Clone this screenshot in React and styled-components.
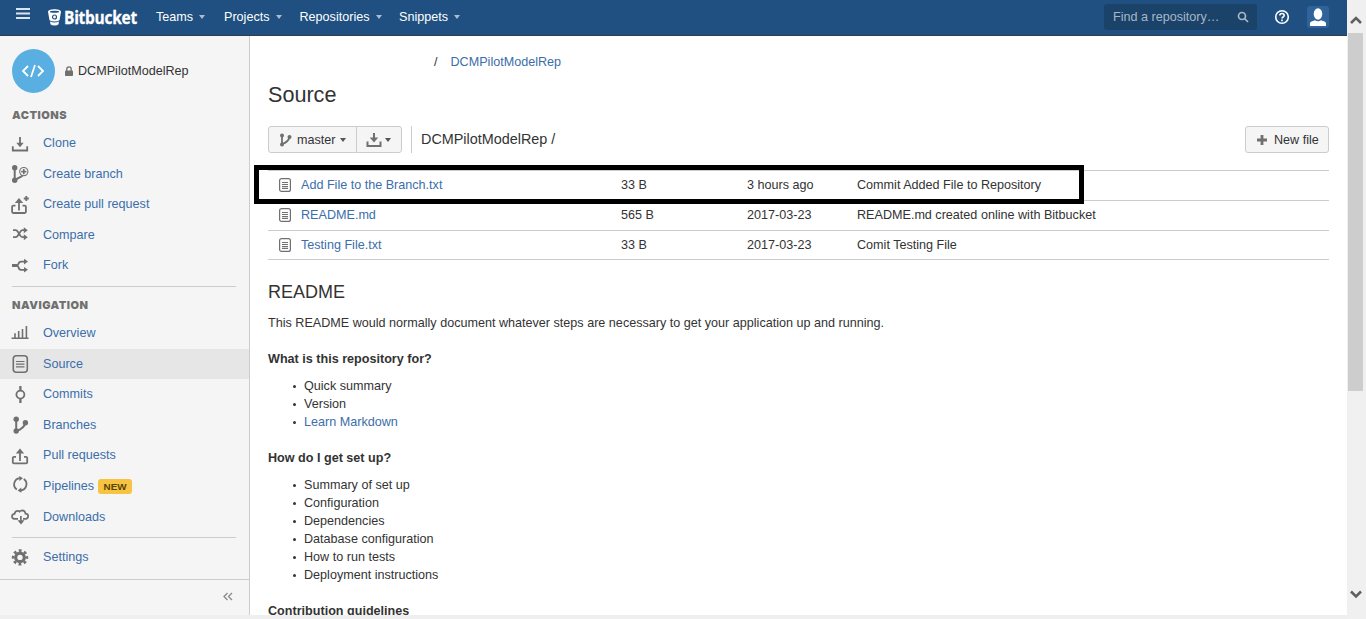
import React from "react";
import styled, { createGlobalStyle } from "styled-components";

const Global = createGlobalStyle`
  * { box-sizing: border-box; }
  body { margin: 0; overflow: hidden; background: #efefef; color: #333; font: 12.6px/18px "Liberation Sans", Arial, sans-serif; }
  ul, h1, h2, h3, p { margin: 0; padding: 0; }
  a { color: #3b6eaa; text-decoration: none; }
  svg { display: block; flex: none; }
`;

const Screen = styled.div`
  display: flex;
  height: 619px;
  width: 1366px;
`;
const Page = styled.div`
  width: 1347px;
  height: 615px;
  display: flex;
  flex-direction: column;
  overflow: hidden;
  background: #fff;
`;
const Header = styled.header`
  height: 36px;
  flex: none;
  display: flex;
  align-items: center;
  padding: 0 18px 1px 16px;
  background: #205081;
  border-bottom: 1px solid #2e3d54;
  color: #fff;
`;
const MenuToggle = styled.div`
  margin-bottom: 6px;
`;
const Brand = styled.div`
  display: flex;
  align-items: center;
  width: 108px;
  margin-left: 18px;
`;
const BrandName = styled.span`
  margin-left: 3px;
  font: 700 18px/20px "Open Sans", sans-serif;
  transform: scaleX(0.86);
  transform-origin: left;
  letter-spacing: -0.3px;
  -webkit-text-stroke: 0.3px #fff;
`;
const Menu = styled.div`
  display: flex;
  align-items: center;
  width: ${(p) => p.$w}px;
`;
const Caret = styled.i`
  border: 3.5px solid transparent;
  border-top: 4px solid ${(p) => p.$color || "#a9bdd3"};
  border-bottom: 0;
  margin-left: ${(p) => p.$gap ?? 6}px;
`;
const Search = styled.div`
  width: 153px;
  height: 26px;
  margin: 0 0 1px auto;
  padding: 0 8px 0 9px;
  display: flex;
  align-items: center;
  justify-content: space-between;
  border-radius: 3px;
  background: #1b4268;
  color: #a6b8ca;
`;
const UserBox = styled.div`
  width: 22px;
  height: 22px;
  margin-left: 17px;
  border-radius: 3px;
  background: #2f639a;
`;
const HelpBox = styled.div`
  margin-left: 17px;
`;
const Body = styled.div`
  flex: 1;
  min-height: 0;
  display: flex;
`;
const Sidebar = styled.aside`
  width: 250px;
  flex: none;
  display: flex;
  flex-direction: column;
  background: #f5f5f5;
  border-right: 1px solid #ccc;
`;
const Repo = styled.div`
  display: flex;
  align-items: center;
  height: 44px;
  margin: 13px 0 0 12px;
`;
const Avatar = styled.div`
  width: 43px;
  height: 44px;
  border-radius: 50%;
  background: #59afe1;
  display: flex;
  align-items: center;
  justify-content: center;
  margin-right: 10px;
  padding-right: 2px;
`;
const RepoName = styled.span`
  margin: -1px 0 0 5px;
`;
const SideTitle = styled.h2`
  font: 900 11px/18px Inter, "Liberation Sans", sans-serif;
  color: #707070;
  text-transform: uppercase;
  padding-left: 12px;
  margin-top: ${(p) => p.$top}px;
  letter-spacing: 0.5px;
`;
const Items = styled.nav`
  padding-top: ${(p) => p.$top}px;
`;
const Item = styled.a`
  display: flex;
  align-items: center;
  gap: 13px;
  height: 30.55px;
  padding-left: 10px;
  background: ${(p) => (p.$active ? "#e6e6e6" : "none")};
`;
const Badge = styled.span`
  margin: 1px 0 0 -9px;
  width: 34px;
  height: 15px;
  border-radius: 3px;
  background: #f6c342;
  color: #594300;
  font: 700 9.9px/15px "Liberation Sans", sans-serif;
  text-align: center;
`;
const Rule = styled.div`
  height: 1px;
  background: #ccc;
  margin: ${(p) => p.$top}px 13px 0 12px;
`;
const Collapse = styled.div`
  margin-top: auto;
  height: 36px;
  border-top: 1px solid #ccc;
  display: flex;
  align-items: center;
  justify-content: flex-end;
  padding: 0 16px 2px 0;
`;
const Main = styled.main`
  flex: 1;
  min-width: 0;
  padding: 17px 18px 0;
`;
const Crumbs = styled.div`
  display: flex;
  gap: 13px;
  padding-left: 166px;
`;
const Title = styled.h1`
  font-size: 21.6px;
  line-height: 26px;
  font-weight: 400;
  margin-top: 11px;
`;
const Toolbar = styled.div`
  display: flex;
  align-items: center;
  height: 27px;
  margin-top: 18px;
`;
const Button = styled.button`
  display: flex;
  align-items: center;
  height: 27px;
  width: ${(p) => p.$w}px;
  padding: 0 0 0 ${(p) => p.$pad}px;
  margin: 0 0 0 ${(p) => p.$ml ?? 0};
  border: 1px solid #ccc;
  border-radius: ${(p) => p.$radius || "3px"};
  background: #f5f5f5;
  color: #333;
  font: inherit;
`;
const ButtonText = styled.span`
  margin-left: ${(p) => p.$gap}px;
`;
const Path = styled.div`
  margin-left: 9px;
  height: 27px;
  padding-left: 9px;
  border-left: 1px solid #ccc;
  font-size: 14.4px;
  line-height: 27px;
`;
const Files = styled.div`
  position: relative;
  margin-top: 17px;
  border-top: 1px solid #ccc;
`;
const FileRow = styled.div`
  display: grid;
  grid-template-columns: 22px 320px 126px 110px 1fr;
  align-items: center;
  height: ${(p) => p.$h}px;
  padding: 0 0 1px 11px;
  border-bottom: 1px solid #ccc;
`;
const Highlight = styled.div`
  position: absolute;
  left: -14px;
  top: -6px;
  width: 830px;
  height: 39px;
  border: 5px solid #000;
`;
const ReadmeTitle = styled.h2`
  font-size: 18px;
  line-height: 22px;
  font-weight: 400;
  margin-top: 21px;
`;
const Para = styled.p`
  margin-top: 11px;
`;
const Sub = styled.h3`
  font-size: 12.6px;
  font-weight: 700;
  margin-top: 18px;
`;
const Bullets = styled.ul`
  list-style: none;
  margin-top: 9px;
`;
const Bullet = styled.li`
  display: flex;
  align-items: center;
  padding-left: 25px;
  &::before {
    content: "";
    width: 3px;
    height: 3px;
    border-radius: 50%;
    background: #333;
    margin: 1px 8px 0 0;
  }
`;
const Scrollbar = styled.div`
  width: 19px;
  padding: 13px 3px 17px 1px;
  display: flex;
  flex-direction: column;
  align-items: center;
  background: #f0f0f0;
`;
const Thumb = styled.div`
  width: 15px;
  height: 358px;
  margin: 8px 0 auto;
  background: #cdcdcd;
`;

const G = "#707070";
const Icon = ({ children, size = 20, w, h, vb, sw = 1.8, color = G }) => (
  <svg width={w || size} height={h || size} viewBox={vb || "0 0 20 20"} fill="none" stroke={color} strokeWidth={sw}>
    {children}
  </svg>
);
const F = { fill: G, stroke: "none" };

const icons = {
  clone: (
    <>
      <path d="M2.800 13.200v4.300h14.400v-4.300M10 4v7" />
      <path {...F} d="M6.300 9.700h7.400L10 14.300z" />
    </>
  ),
  createBranch: (
    <>
      <circle {...F} cx="4.700" cy="3.800" r="2.700" />
      <circle {...F} cx="4.700" cy="16.200" r="2.700" />
      <path d="M4.700 4v12l5-2.600q2-1 2.600-1.800" strokeWidth="2" />
      <circle cx="13.800" cy="7.600" r="4.100" strokeWidth="1.100" />
      <path d="M13.800 5v5.200M11.200 7.600h5.200" strokeWidth="1.600" />
    </>
  ),
  createPull: (
    <>
      <path d="M5.500 11.600H3.300q-1.200 0-1.200 1.200v5q0 1.200 1.200 1.200h11.400q1.200 0 1.200-1.200v-5q0-1.200-1.200-1.200H12.500M9 8v8.500" />
      <path {...F} d="M4.800 9h8.400L9 4z" />
      <path d="M16.300 2v5M13.800 4.500h5" />
    </>
  ),
  compare: (
    <>
      <path d="M3 5.200h2.500q1.500 0 2.700 2l1.800 3q1 2 2.500 2H15M3 12.200h2.500q1.500 0 2.600-2l1.900-3q1-2 2.500-2H15" />
      <path {...F} d="M13.800 2.200l4 3-4 3zM13.800 9.200l4 3-4 3z" />
    </>
  ),
  fork: (
    <>
      <path d="M2 10.500h5" strokeWidth="3" />
      <path d="M6.500 10.500q1.500 0 2-1.700.6-2.200 2.500-2.200h4M6.500 10.500q1.500 0 2 1.700.6 2.600 2.500 2.600h4" />
      <path {...F} d="M14 3.800l4 2.800-4 2.800zM14 12l4 2.800-4 2.800z" />
    </>
  ),
  overview: <path d="M1.500 15.300h17M5 15v-4.700M8.700 15V8M12.500 15V6M16.400 15V3" strokeWidth="1.600" />,
  source: (
    <>
      <rect x="3.300" y="1.800" width="14" height="16.500" rx="3" strokeWidth="1.600" />
      <path d="M6 7.500h8.500M6 10.200h8.500M6 12.900h8.500" strokeWidth="1.200" />
    </>
  ),
  commits: (
    <>
      <circle cx="10.400" cy="10.600" r="4" />
      <path d="M10.400 2v4.500M10.400 14.700V19" strokeWidth="2.300" />
    </>
  ),
  branches: (
    <>
      <circle {...F} cx="6.200" cy="4.200" r="2.700" />
      <circle {...F} cx="6.200" cy="16" r="2.700" />
      <circle {...F} cx="15.400" cy="7.800" r="2.700" />
      <path d="M6.200 4v12q8-2.500 9-8" strokeWidth="2" />
    </>
  ),
  pull: (
    <>
      <path d="M6 11.800H4q-1.200 0-1.200 1.200v4.200q0 1.200 1.200 1.200h12q1.200 0 1.200-1.200V13q0-1.200-1.200-1.200H14M10 7.500V16" />
      <path {...F} d="M5.800 8.600h8.400L10 3.600z" />
    </>
  ),
  pipelines: (
    <>
      <path d="M9.800 2.100A6.300 6.300 0 0 0 6.800 13.500M10.800 14.500A6.300 6.300 0 0 0 13.800 3.100" />
      <path {...F} d="M9.300 0l3.700 2.200-3.700 2.800zM11.300 11.600v5.200l-3.700-2.400z" />
    </>
  ),
  downloads: (
    <>
      <path d="M8 11.800H4.500q-2.500-.2-2.500-2.400 0-2.400 2.600-2.600.4-3 3.200-3 1.200 0 1.900.8 1-1.300 2.700-1.300 2.800.2 3.100 3.400 2.700.2 2.700 2.700-.2 2.300-2.600 2.400H13M10.900 9v5" strokeWidth="1.700" />
      <path {...F} d="M7.500 13.200h7l-3.500 4.300z" />
    </>
  ),
  settings: (
    <>
      <circle cx="10" cy="10.400" r="4.300" strokeWidth="3.200" />
      <circle cx="10" cy="10.400" r="6.900" strokeWidth="2.600" strokeDasharray="2.800 2.619" strokeDashoffset="1.400" />
    </>
  ),
};

const NavItem = ({ icon, label, active, badge }) => (
  <Item href="#" $active={active}>
    <Icon>{icons[icon]}</Icon>
    <span>{label}</span>
    {badge && <Badge>{badge}</Badge>}
  </Item>
);

const actions = [
  ["clone", "Clone"],
  ["createBranch", "Create branch"],
  ["createPull", "Create pull request"],
  ["compare", "Compare"],
  ["fork", "Fork"],
];
const navigation = [
  ["overview", "Overview"],
  ["source", "Source"],
  ["commits", "Commits"],
  ["branches", "Branches"],
  ["pull", "Pull requests"],
  ["pipelines", "Pipelines"],
  ["downloads", "Downloads"],
];
const menus = [
  ["Teams", 68],
  ["Projects", 75.5],
  ["Repositories", 99.5],
  ["Snippets", 70],
];
const files = [
  ["Add File to the Branch.txt", "33 B", "3 hours ago", "Commit Added File to Repository", 30],
  ["README.md", "565 B", "2017-03-23", "README.md created online with Bitbucket", 30],
  ["Testing File.txt", "33 B", "2017-03-23", "Comit Testing File", 29],
];
const setup = ["Summary of set up", "Configuration", "Dependencies", "Database configuration", "How to run tests", "Deployment instructions"];

export default function App() {
  return (
    <>
      <Global />
      <Screen>
        <Page>
          <Header>
            <MenuToggle>
              <Icon w={14} h={12} vb="0 0 14 12" color="#dbe4ee" sw={2}>
                <path d="M0 1h14M0 5.500h14M0 10h14" />
              </Icon>
            </MenuToggle>
            <Brand>
              <svg width="13" height="17" viewBox="0 0 13 17">
                <path fill="#fff" d="M0 2.800C0 1.200 3 .3 6.500.3S13 1.200 13 2.800l-1.500 8.500q-2 1.300-5 1.300t-5-1.300zM2 12.600q2 1 4.500 1t4.500-1l-.5 2.600q-1 1.300-4 1.300t-4-1.300z" />
                <ellipse cx="6.500" cy="2.700" rx="4.600" ry="1" fill="#205081" />
                <circle cx="6.500" cy="8" r="2" fill="none" stroke="#205081" strokeWidth="1.200" />
              </svg>
              <BrandName>Bitbucket</BrandName>
            </Brand>
            {menus.map(([m, w]) => (
              <Menu key={m} $w={w}>
                {m}
                <Caret />
              </Menu>
            ))}
            <Search>
              Find a repository…
              <Icon w={12} h={12} vb="0 0 12 12" color="#a6b8ca" sw={1.7}>
                <circle cx="5" cy="5" r="3.500" />
                <path d="M7.500 7.500l3.500 3.500" />
              </Icon>
            </Search>
            <HelpBox>
              <Icon w={16} h={16} vb="0 0 16 16" color="#fff" sw={1.6}>
                <circle cx="8" cy="8" r="6.300" />
                <path d="M5.800 6.500q.1-2 2.200-2t2.200 1.800q0 1-1.100 1.700T8 9.600M8 10.600v1.700" />
              </Icon>
            </HelpBox>
            <UserBox>
              <svg width="22" height="22" viewBox="0 0 22 22" fill="#fff">
                <ellipse cx="11" cy="8" rx="4.300" ry="5.700" />
                <path d="M3 20v-2.500q0-1.500 1.500-2l3.500-1.300q1.400 1 3 1t3-1l3.500 1.300q1.500.5 1.500 2V20z" />
              </svg>
            </UserBox>
          </Header>
          <Body>
            <Sidebar>
              <Repo>
                <Avatar>
                  <Icon w={24} h={16} vb="0 0 24 16" color="#fff" sw={1.8}>
                    <path d="M7 3L2 8l5 5M17 3l5 5-5 5M14 2l-4 12" />
                  </Icon>
                </Avatar>
                <svg width="8" height="10" viewBox="0 0 8 10">
                  <rect y="4.500" width="8" height="5.500" rx=".8" fill={G} />
                  <path d="M1.800 5V3q0-2.200 2.200-2.200T6.200 3v2" fill="none" stroke={G} strokeWidth="1.300" />
                </svg>
                <RepoName>DCMPilotModelRep</RepoName>
              </Repo>
              <SideTitle $top={13}>Actions</SideTitle>
              <Items $top={4}>
                {actions.map(([icon, label]) => (
                  <NavItem key={label} icon={icon} label={label} />
                ))}
              </Items>
              <Rule $top={5} />
              <SideTitle $top={9}>Navigation</SideTitle>
              <Items $top={4.3}>
                {navigation.map(([icon, label]) => (
                  <NavItem key={label} icon={icon} label={label} active={label === "Source"} badge={label === "Pipelines" && "NEW"} />
                ))}
              </Items>
              <Rule $top={5} />
              <Items $top={3.4}>
                <NavItem icon="settings" label="Settings" />
              </Items>
              <Collapse>
                <Icon w={10} h={9} vb="0 0 10 9" color="#8a8a8a" sw={1.3}>
                  <path d="M4.500 1L1 4.500 4.500 8M9 1L5.500 4.500 9 8" />
                </Icon>
              </Collapse>
            </Sidebar>
            <Main>
              <Crumbs>
                <span>/</span>
                <a href="#">DCMPilotModelRep</a>
              </Crumbs>
              <Title>Source</Title>
              <Toolbar>
                <Button $w={89} $pad={10} $radius="3px 0 0 3px">
                  <Icon w={13} h={14} vb="0 0 13 14">
                    <circle {...F} cx="3" cy="2.500" r="2" />
                    <circle {...F} cx="3" cy="11.500" r="2" />
                    <circle {...F} cx="10.500" cy="4" r="2" />
                    <path d="M3 2v9q6.500-2 7.500-7" />
                  </Icon>
                  <ButtonText $gap={5}>master</ButtonText>
                  <Caret $color="#555" $gap={4} />
                </Button>
                <Button $w={46} $pad={9} $ml="-1px" $radius="0 3px 3px 0">
                  <Icon w={16} h={16} vb="0 0 16 16" sw={2}>
                    <path d="M1.500 9.500v4.500h13V9.500M8 1v5" />
                    <path {...F} d="M3.800 5.500h8.400L8 10.500z" />
                  </Icon>
                  <Caret $color="#555" $gap={3} />
                </Button>
                <Path>DCMPilotModelRep /</Path>
                <Button $w={84} $pad={11} $ml="auto">
                  <Icon w={10} h={10} vb="0 0 10 10" sw={2.8}>
                    <path d="M5 0v10M0 5h10" />
                  </Icon>
                  <ButtonText $gap={7}>New file</ButtonText>
                </Button>
              </Toolbar>
              <Files>
                {files.map(([name, size, date, msg, h]) => (
                  <FileRow key={name} $h={h}>
                    <Icon w={12} h={14} vb="0 0 12 14" sw={1.2}>
                      <rect x=".6" y=".6" width="10.800" height="12.800" rx="2" />
                      <path d="M3 4.500h6M3 6.500h6M3 8.500h6M3 10.300h6" />
                    </Icon>
                    <a href="#">{name}</a>
                    <span>{size}</span>
                    <span>{date}</span>
                    <span>{msg}</span>
                  </FileRow>
                ))}
                <Highlight />
              </Files>
              <ReadmeTitle>README</ReadmeTitle>
              <Para>This README would normally document whatever steps are necessary to get your application up and running.</Para>
              <Sub>What is this repository for?</Sub>
              <Bullets>
                <Bullet>Quick summary</Bullet>
                <Bullet>Version</Bullet>
                <Bullet>
                  <a href="#">Learn Markdown</a>
                </Bullet>
              </Bullets>
              <Sub>How do I get set up?</Sub>
              <Bullets>
                {setup.map((s) => (
                  <Bullet key={s}>{s}</Bullet>
                ))}
              </Bullets>
              <Sub>Contribution guidelines</Sub>
            </Main>
          </Body>
        </Page>
        <Scrollbar>
          <Icon w={12} h={12} vb="0 0 12 12" color="#606060" sw={2.6}>
            <path d="M1 10l5-5 5 5" />
          </Icon>
          <Thumb />
          <Icon w={12} h={12} vb="0 0 12 12" color="#606060" sw={2.6}>
            <path d="M1 1.500l5 5 5-5" />
          </Icon>
        </Scrollbar>
      </Screen>
    </>
  );
}
